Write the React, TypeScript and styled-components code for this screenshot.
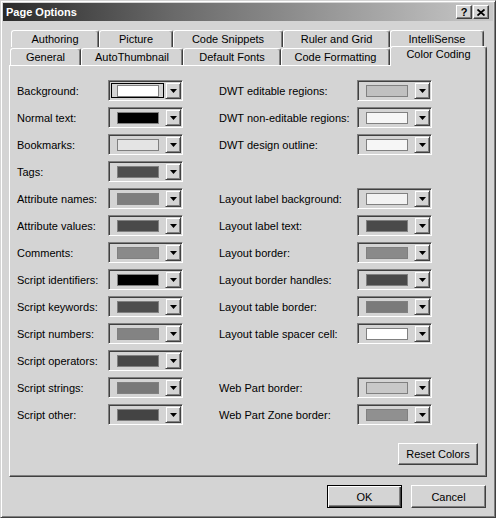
import React from "react";
import styled, { createGlobalStyle, css } from "styled-components";

const GlobalStyle = createGlobalStyle`
  html, body { margin: 0; padding: 0; background: #d4d4d4; }
  body { font-family: "Liberation Sans", Arial, sans-serif; font-size: 11px; color: #000; }
  * { box-sizing: border-box; }
`;

const Window = styled.div`
  width: 496px;
  height: 518px;
  background: #d4d4d4;
  border: 1px solid;
  border-color: #d4d4d4 #404040 #404040 #d4d4d4;
  box-shadow: inset 1px 1px #fff, inset -1px -1px #808080;
  padding: 2px;
  display: flex;
  flex-direction: column;
`;

const TitleBar = styled.div`
  height: 18px;
  flex: none;
  display: flex;
  align-items: center;
  padding: 0 4px 0 3px;
  background: linear-gradient(to right, #2a2a2a 0%, #6a6a6a 35%, #c8c8c8 100%);
  color: #fff;
  font-weight: bold;
  font-size: 11px;
`;

const Title = styled.span`
  flex: 1;
`;

const CaptionButtons = styled.div`
  display: flex;
  gap: 1px;
`;

const CaptionButton = styled.div`
  width: 16px;
  height: 14px;
  background: #d4d4d4;
  color: #000;
  border: 1px solid;
  border-color: #fff #404040 #404040 #fff;
  box-shadow: inset -1px -1px #808080;
  display: flex;
  align-items: center;
  justify-content: center;
  font-weight: bold;
  font-size: 11px;
  line-height: 1;
`;

const Body = styled.div`
  flex: 1;
  display: flex;
  flex-direction: column;
  padding: 9px 6px 0 6px;
`;

const TabRowBack = styled.div`
  display: flex;
  height: 17px;
  padding-left: 2px;
`;

const TabRowFront = styled.div`
  display: flex;
  height: 18px;
  align-items: flex-end;
  padding-left: 1px;
`;

const Tab = styled.div<{ $w: number; $selected?: boolean }>`
  width: ${(p) => p.$w}px;
  height: 17px;
  flex: none;
  display: flex;
  justify-content: center;
  align-items: center;
  border-top: 1px solid #fff;
  border-left: 1px solid #fff;
  border-right: 1px solid #404040;
  box-shadow: inset -1px 0 #808080;
  border-radius: 3px 3px 0 0;
  background: #d4d4d4;
  white-space: nowrap;
  ${(p) =>
    p.$selected &&
    css`
      height: 20px;
      margin-bottom: -1px;
      position: relative;
      z-index: 1;
      align-items: flex-start;
      padding-top: 1px;
    `}
`;

const Panel = styled.div`
  height: 412px;
  flex: none;
  border: 1px solid;
  border-color: #fff #404040 #404040 #fff;
  box-shadow: inset -1px -1px #808080;
  padding: 14px 8px 0 7px;
  display: flex;
  flex-direction: column;
`;

const Rows = styled.div`
  display: flex;
  flex-direction: column;
  gap: 6px;
`;

const FormRow = styled.div`
  display: grid;
  grid-template-columns: 91px 75px 36px 138px 75px;
  height: 21px;
  align-items: center;
`;

const Label = styled.span<{ $col: number }>`
  grid-column: ${(p) => p.$col};
  white-space: nowrap;
`;

const Picker = styled.div<{ $col: number }>`
  grid-column: ${(p) => p.$col};
  width: 75px;
  height: 21px;
  display: flex;
  border: 1px solid;
  border-color: #808080 #fff #fff #808080;
  box-shadow: inset 1px 1px #404040, inset -1px -1px #d4d4d4;
  padding: 1px;
`;

const Field = styled.div<{ $focused?: boolean }>`
  flex: 1;
  display: flex;
  align-items: center;
  justify-content: center;
  ${(p) =>
    p.$focused &&
    css`
      box-shadow: inset 0 0 0 1px #d4d4d4, inset 0 0 0 2px #000;
    `}
`;

const Swatch = styled.div<{ $color: string }>`
  width: 42px;
  height: 12px;
  border: 1px solid #808080;
  background: ${(p) => p.$color};
`;

const DropButton = styled.div`
  width: 16px;
  height: 100%;
  display: flex;
  align-items: center;
  justify-content: center;
  border: 1px solid;
  border-color: #d4d4d4 #404040 #404040 #d4d4d4;
  box-shadow: inset 1px 1px #fff, inset -1px -1px #808080;
`;

const ResetRow = styled.div`
  display: flex;
  justify-content: flex-end;
  margin-top: 18px;
`;

const Button = styled.button<{ $w: number; $default?: boolean }>`
  width: ${(p) => p.$w}px;
  height: 23px;
  padding: 0;
  font-family: inherit;
  font-size: 11px;
  color: #000;
  background: #d4d4d4;
  border: 1px solid;
  border-color: #fff #404040 #404040 #fff;
  box-shadow: inset -1px -1px #808080;
  ${(p) =>
    p.$default &&
    css`
      border-color: #000;
      box-shadow: inset 1px 1px #fff, inset -1px -1px #404040, inset -2px -2px #808080;
    `}
`;

const Footer = styled.div`
  display: flex;
  justify-content: flex-end;
  gap: 9px;
  padding: 8px 1px 0 0;
`;

const Arrow = () => (
  <svg width="7" height="4" viewBox="0 0 7 4">
    <polygon points="0,0 7,0 3.5,4" fill="#000" />
  </svg>
);

const CloseGlyph = () => (
  <svg width="8" height="7" viewBox="0 0 8 7">
    <path d="M0.5 0.5 L7.5 6.5 M7.5 0.5 L0.5 6.5" stroke="#000" strokeWidth="1.8" />
  </svg>
);

type Item = { label: string; color: string; focused?: boolean } | null;

const left: Item[] = [
  { label: "Background:", color: "#ffffff", focused: true },
  { label: "Normal text:", color: "#000000" },
  { label: "Bookmarks:", color: "#e4e4e4" },
  { label: "Tags:", color: "#4e4e4e" },
  { label: "Attribute names:", color: "#7e7e7e" },
  { label: "Attribute values:", color: "#4a4a4a" },
  { label: "Comments:", color: "#8a8a8a" },
  { label: "Script identifiers:", color: "#000000" },
  { label: "Script keywords:", color: "#4e4e4e" },
  { label: "Script numbers:", color: "#838383" },
  { label: "Script operators:", color: "#484848" },
  { label: "Script strings:", color: "#787878" },
  { label: "Script other:", color: "#444444" },
];

const right: Item[] = [
  { label: "DWT editable regions:", color: "#c0c0c0" },
  { label: "DWT non-editable regions:", color: "#f6f6f6" },
  { label: "DWT design outline:", color: "#f6f6f6" },
  null,
  { label: "Layout label background:", color: "#f2f2f2" },
  { label: "Layout label text:", color: "#4a4a4a" },
  { label: "Layout border:", color: "#8a8a8a" },
  { label: "Layout border handles:", color: "#4a4a4a" },
  { label: "Layout table border:", color: "#7a7a7a" },
  { label: "Layout table spacer cell:", color: "#ffffff" },
  null,
  { label: "Web Part border:", color: "#c8c8c8" },
  { label: "Web Part Zone border:", color: "#909090" },
];

const backTabs = [
  { label: "Authoring", w: 88 },
  { label: "Picture", w: 74 },
  { label: "Code Snippets", w: 110 },
  { label: "Ruler and Grid", w: 107 },
  { label: "IntelliSense", w: 94 },
];

const frontTabs = [
  { label: "General", w: 71 },
  { label: "AutoThumbnail", w: 102 },
  { label: "Default Fonts", w: 98 },
  { label: "Code Formatting", w: 109 },
  { label: "Color Coding", w: 97, selected: true },
];

const ColorField = ({ item, labelCol, pickerCol }: { item: Item; labelCol: number; pickerCol: number }) => {
  if (!item) return null;
  return (
    <>
      <Label $col={labelCol}>{item.label}</Label>
      <Picker $col={pickerCol}>
        <Field $focused={item.focused}>
          <Swatch $color={item.color} />
        </Field>
        <DropButton>
          <Arrow />
        </DropButton>
      </Picker>
    </>
  );
};

export default function App() {
  return (
    <>
      <GlobalStyle />
      <Window>
        <TitleBar>
          <Title>Page Options</Title>
          <CaptionButtons>
            <CaptionButton>?</CaptionButton>
            <CaptionButton>
              <CloseGlyph />
            </CaptionButton>
          </CaptionButtons>
        </TitleBar>
        <Body>
          <TabRowBack>
            {backTabs.map((t) => (
              <Tab key={t.label} $w={t.w}>
                {t.label}
              </Tab>
            ))}
          </TabRowBack>
          <TabRowFront>
            {frontTabs.map((t) => (
              <Tab key={t.label} $w={t.w} $selected={t.selected}>
                {t.label}
              </Tab>
            ))}
          </TabRowFront>
          <Panel>
            <Rows>
              {left.map((l, i) => (
                <FormRow key={i}>
                  <ColorField item={l} labelCol={1} pickerCol={2} />
                  <ColorField item={right[i]} labelCol={4} pickerCol={5} />
                </FormRow>
              ))}
            </Rows>
            <ResetRow>
              <Button $w={80} style={{ height: 22 }}>Reset Colors</Button>
            </ResetRow>
          </Panel>
          <Footer>
            <Button $w={75} $default>
              OK
            </Button>
            <Button $w={75}>Cancel</Button>
          </Footer>
        </Body>
      </Window>
    </>
  );
}
